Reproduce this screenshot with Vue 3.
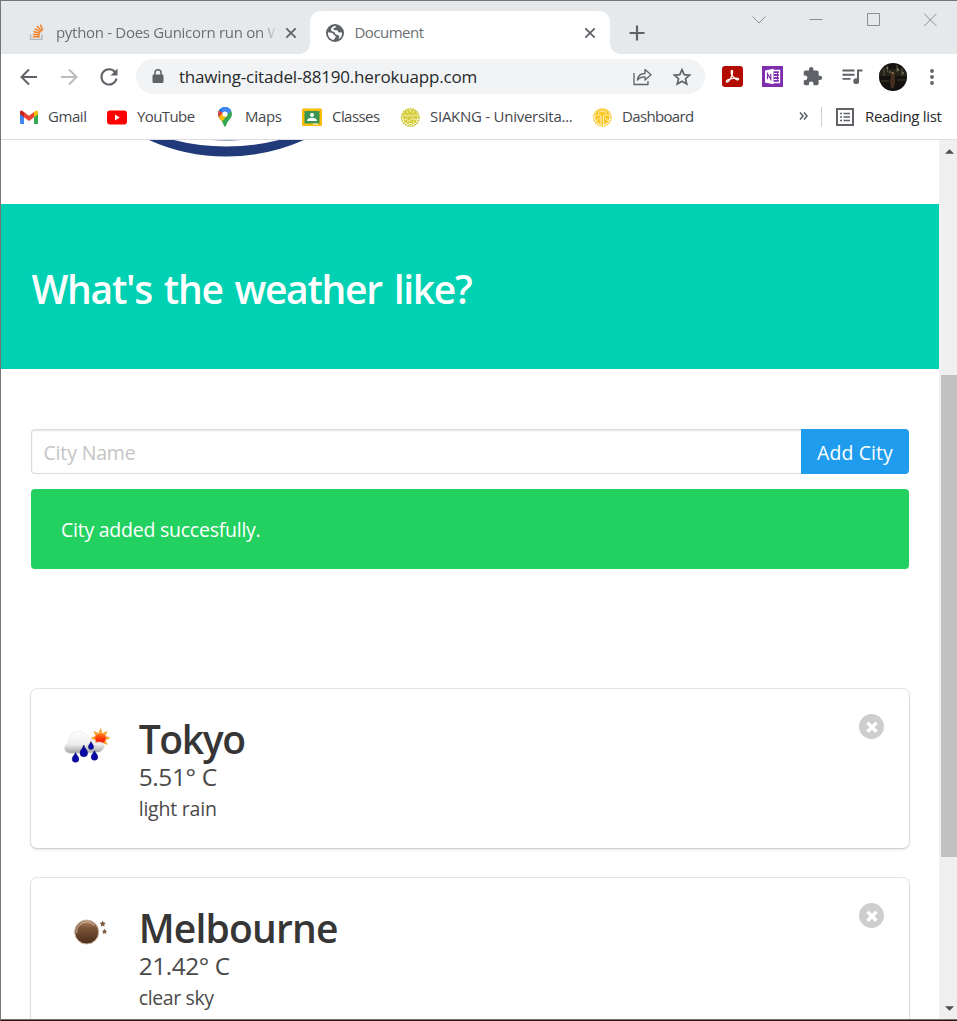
<script setup>
const bookmarks = [
  { id: 'gmail', label: 'Gmail', width: 39 },
  { id: 'youtube', label: 'YouTube', width: 58 },
  { id: 'maps', label: 'Maps', width: 37 },
  { id: 'classes', label: 'Classes', width: 48 },
  { id: 'siak', label: 'SIAKNG - Universita...', width: 143 },
  { id: 'dashboard', label: 'Dashboard', width: 72 },
]

const cities = [
  { name: 'Tokyo', nameWidth: 106, temp: '5.51° C', tempWidth: 78, sky: 'light rain', skyWidth: 78, icon: 'rain' },
  { name: 'Melbourne', nameWidth: 199, temp: '21.42° C', tempWidth: 91, sky: 'clear sky', skyWidth: 75, icon: 'night' },
]

const rays = [0, 45, 90, 135, 180, 225, 270, 315]

// Tracks a single line of text so that it spans the given width.
const vFit = {
  mounted(el, { value }) {
    el.style.letterSpacing = '0px'
    const natural = el.getBoundingClientRect().width
    el.style.letterSpacing = `${(value - natural) / el.textContent.length}px`
  },
}
</script>

<template>
  <div class="window">
    <header class="tabs">
      <div class="tab idle">
        <svg class="tab-icon so" viewBox="0 0 16 18">
          <path d="M1.2 11v5.3h12V11" fill="none" stroke="#b4b8bc" stroke-width="1.5" />
          <g stroke="#f48024" stroke-width="1.6">
            <path d="M3.5 13.6h7.4M3.7 10.9l7.3 .9M4.3 7.9l7 2.2M5.6 4.8l6.3 3.9M8 2.2l5 5.4M11.6 .5l2.5 6.3" />
          </g>
        </svg>
        <div class="tab-title clipped"><span v-fit="225">python - Does Gunicorn run on W</span></div>
        <svg class="tab-close" viewBox="0 0 12 12"><path d="M1.3 1.3l9.4 9.4M10.7 1.3l-9.4 9.4" /></svg>
      </div>
      <div class="tab active">
        <svg class="tab-icon globe" viewBox="0 0 18 18">
          <circle cx="9" cy="9" r="9" fill="#5f6368" />
          <path d="M2 8.2c2 .6 4.400 .2 5.300 1.600.5 1 .2 1.500 1.500 1.700 1.100.2 1.200.8.600 1.700-.5.900-.6 1.700-1.600 2.600C4.300 15.600 1.600 12.500 2 8.200zM9.700 2.100c.9 1-.4 1.700-1.500 2-1.300.5-.9 1.500-.1 2 .9.500 2.700-.5 3.500.5.6.800.2 1.700 1.500 1.900 1.200.1 2-.6 2.800-.1.500 3-1 5.500-3.400 6.700.2-1.400 1-2 .7-3.100-.5-1.300-2.400-.9-3.500-1.800-.9-.8-.4-1.900-1.600-2.300-1.500-.4-3-.8-3.200-2.100C5.300 3.500 7.300 2 9.700 2.100z" fill="#fff" />
        </svg>
        <div class="tab-title"><span v-fit="69">Document</span></div>
        <svg class="tab-close" viewBox="0 0 12 12"><path d="M1.300 1.300l9.400 9.400M10.700 1.300l-9.400 9.400" /></svg>
      </div>
      <svg class="new-tab" viewBox="0 0 16 16"><path d="M8 .5v15M.5 8h15" /></svg>
      <div class="controls">
        <svg viewBox="0 0 14 14"><path d="M.5 3.500l6.500 6.500 6.500-6.500" /></svg>
        <svg viewBox="0 0 14 14"><path d="M.5 6.500h13" /></svg>
        <svg viewBox="0 0 14 14"><path d="M1.500 .5h12v12h-12z" /></svg>
        <svg viewBox="0 0 14 14"><path d="M1.200 .7l12.300 12.300M13.500 .7L1.200 13" /></svg>
      </div>
    </header>

    <div class="toolbar">
      <div class="cell">
        <svg class="line" width="18" height="18" viewBox="0 0 18 18"><path d="M17 9H2M9 1.500L1.500 9 9 16.500" /></svg>
      </div>
      <div class="cell">
        <svg class="line faded" width="18" height="18" viewBox="0 0 18 18"><path d="M1 9h15M9 1.500L16.500 9 9 16.500" /></svg>
      </div>
      <div class="cell">
        <svg width="20" height="20" viewBox="0 0 20 20">
          <path d="M16 5.200A7.600 7.600 0 1 0 17.500 11.500" fill="none" stroke="#5f6368" stroke-width="2" />
          <path d="M18.500 1.500v7h-7z" fill="#5f6368" />
        </svg>
      </div>
      <div class="address">
        <svg class="lock" viewBox="0 0 12 15">
          <rect x=".5" y="5.500" width="11" height="8.500" rx="1.300" fill="#5f6368" />
          <path d="M3 6V3.800a3 3 0 0 1 6 0V6" fill="none" stroke="#5f6368" stroke-width="1.500" />
        </svg>
        <div class="url"><span v-fit="298">thawing-citadel-88190.herokuapp.com</span></div>
        <svg class="share" viewBox="0 0 20 19">
          <path d="M2 6v11.500h14V14M5.500 13c.5-4.500 3-6.500 7.500-6.500V2.500l6 5.200-6 5.300V9.800c-3.500 0-5.800.8-7.500 3.200z" fill="none" stroke="#5f6368" stroke-width="1.300" stroke-linejoin="round" />
        </svg>
        <svg class="star" viewBox="0 0 20 20">
          <path d="M10 2.600l2.200 5 5.400 .5-4.100 3.600 1.200 5.300L10 14.200 5.300 17l1.200-5.300L2.400 8.100l5.400-.5z" fill="none" stroke="#5f6368" stroke-width="1.700" />
        </svg>
      </div>
      <div class="extensions">
        <div class="cell">
          <svg width="21" height="21" viewBox="0 0 21 21">
            <rect width="21" height="21" rx="3" fill="#b30b00" />
            <path d="M4.500 15.800c-1-1.200 2.500-3 7-3.500 4-.5 5.500.3 5 1.200-.7 1.200-4.500-1-6.300-4-1.300-2.300-1.400-4.800-.4-5 1.200-.2 1 3.300-.6 6.700-1.500 3.200-3.800 5.600-4.700 4.600z" fill="none" stroke="#fff" stroke-width="1.300" />
          </svg>
        </div>
        <div class="cell">
          <svg width="21" height="21" viewBox="0 0 21 21">
            <rect width="21" height="21" fill="#7f2fae" />
            <path d="M11 4.500h6.500v12H11" fill="none" stroke="#fff" stroke-width="1.300" />
            <path d="M12 7.500h3M12 10.500h3M12 13.500h3M18 7.500h-2M18 10.500h-2M18 13.500h-2" stroke="#fff" stroke-width="1.200" />
            <path d="M3 4.500l8.500-1.700v15.400L3 16.500z" fill="#fff" />
            <path d="M5.500 13.300V7.700l3.300 5.600V7.700" fill="none" stroke="#7f2fae" stroke-width="1.200" />
          </svg>
        </div>
        <div class="cell">
          <svg width="21" height="21" viewBox="0 0 24 24">
            <path fill="#5f6368" d="M20.500 11H19V7c0-1.100-.9-2-2-2h-4V3.500a2.500 2.500 0 0 0-5 0V5H4c-1.100 0-2 .9-2 2v3.800h1.500a2.700 2.700 0 0 1 0 5.400H2V20c0 1.100.9 2 2 2h3.800v-1.500a2.700 2.700 0 0 1 5.400 0V22H17c1.100 0 2-.9 2-2v-4h1.500a2.500 2.500 0 0 0 0-5z" />
          </svg>
        </div>
        <div class="cell">
          <svg width="21" height="18" viewBox="0 0 21 18">
            <path d="M.5 2.500h12M.5 6.700h12M.5 10.900h8" stroke="#5f6368" stroke-width="1.900" />
            <path d="M16 13V2.500h4.500" fill="none" stroke="#5f6368" stroke-width="2" />
            <circle cx="14.200" cy="13.200" r="2.900" fill="#5f6368" />
          </svg>
        </div>
        <div class="cell profile">
          <svg width="28" height="28" viewBox="0 0 28 28">
            <clipPath id="avatar"><circle cx="14" cy="14" r="14" /></clipPath>
            <g clip-path="url(#avatar)">
              <rect width="28" height="28" fill="#14120e" />
              <path d="M0 6h28v7H0z" fill="#24241a" />
              <path d="M5 5v8M8.500 3v6M18 2v7M23 5v8" stroke="#4d4b35" stroke-width="1.300" />
              <path d="M8 4v2M19 5v3M24 9v2M11 8v2" stroke="#a29a76" stroke-width="1" />
              <path d="M12.500 10l2.500-1 1 5v6l-1.500 5H12l-1-6z" fill="#43301f" />
              <path d="M2 18h8M18 17h8" stroke="#33301f" stroke-width="1.500" />
              <circle cx="13.800" cy="10" r="1.200" fill="#8d6b4d" />
            </g>
          </svg>
        </div>
        <div class="cell">
          <svg width="4" height="16" viewBox="0 0 4 16" fill="#5f6368">
            <circle cx="2" cy="2" r="1.900" /><circle cx="2" cy="8" r="1.900" /><circle cx="2" cy="14" r="1.900" />
          </svg>
        </div>
      </div>
    </div>

    <nav class="bookmarks">
      <div v-for="b in bookmarks" :key="b.id" class="bookmark">
        <svg class="bm-icon" viewBox="0 0 20 20">
          <g v-if="b.id === 'gmail'">
            <path d="M1 5.500v10.200c0 .7.5 1.300 1.300 1.300H5V9z" fill="#4285f4" />
            <path d="M19 5.500v10.200c0 .7-.5 1.300-1.300 1.300H15V9z" fill="#34a853" />
            <path d="M15 5l2-1.300c1-.6 2 .2 2 1.300v2.200l-4 3z" fill="#fbbc04" />
            <path d="M1 7.200V5c0-1.100 1-1.900 2-1.300L5 5v5.200z" fill="#c5221f" />
            <path d="M5 4.900l5 3.800 5-3.800v5.300l-5 3.800-5-3.800z" fill="#ea4335" />
          </g>
          <g v-else-if="b.id === 'youtube'">
            <rect y="3.500" width="20" height="14" rx="3" fill="#f00" />
            <path d="M8 7.500l4.800 3L8 13.500z" fill="#fff" />
          </g>
          <g v-else-if="b.id === 'maps'">
            <clipPath id="pin"><path d="M10 0a7 7 0 0 1 7 7c0 4.300-4.600 6.500-5.800 11.500Q10 21 8.800 18.500C7.600 13.500 3 11.300 3 7a7 7 0 0 1 7-7z" /></clipPath>
            <g clip-path="url(#pin)">
              <path d="M0 0h20v20H0z" fill="#34a853" />
              <path d="M2 14L10 7l7-8H8z" fill="#4285f4" />
              <path d="M2 0h6l-1 5-4 4.500z" fill="#1a73e8" />
              <path d="M2 2l6 4-3 6-3-3z" fill="#ea4335" />
              <path d="M3 11L9 5l3 4-5.500 6z" fill="#fbbc04" />
              <path d="M6 1.500L13-1l4 4-7 7z" fill="#4285f4" />
            </g>
            <circle cx="10" cy="7" r="2.600" fill="#fff" />
          </g>
          <g v-else-if="b.id === 'classes'">
            <rect y="1.500" width="20" height="17.500" rx="1.200" fill="#fbbc04" />
            <rect x="2.500" y="4" width="15" height="12.500" fill="#3b9654" />
            <circle cx="10" cy="8" r="2" fill="#fff" />
            <path d="M5 14c0-4.400 10-4.400 10 0z" fill="#fff" />
            <path d="M11 16.500h5v1.200h-5z" fill="#e8f0e9" />
          </g>
          <g v-else :class="['seal', b.id]">
            <circle cx="10.300" cy="10.500" r="8.700" stroke-dasharray="1.800 .7" />
            <path class="core" d="M2.500 9a7.800 7.500 0 0 1 15.500 0l-2 6.500-5.700 3-5.800-3z" />
            <path v-if="b.id === 'siak'" class="cut" d="M10.300 2v3M6.500 4l1.500 2M14 4l-1.500 2M3.500 8.500q3-1 4.500 1.500M17 8.500q-3-1-4.500 1.500M4.500 12.500q2-2 3 .5t3 0 5.500-.5M6.500 16l1-1.500M14 16l-1-1.500M8 7.500l2.300 2 2.300-2M8.500 16.500h3.600" />
            <path v-else class="cut" d="M2 10q4-4 7-1v9M18.500 10q-4-4-7-1v9M6 5.500q4-3 8.500 0M4.500 14l3-3M16 14l-3-3" />
          </g>
        </svg>
        <div class="bm-label" :style="{ width: b.width + 'px' }"><span v-fit="b.width - 0.5">{{ b.label }}</span></div>
      </div>
      <div class="reading">
        <svg class="more" viewBox="0 0 9 8"><path d="M1 .5L4 4 1 7.500M5 .5L8 4 5 7.500" /></svg>
        <i class="divider"></i>
        <svg class="list" viewBox="0 0 18 18">
          <rect x="1" y="1" width="16" height="16" stroke-width="2" fill="none" />
          <path d="M4 5.500h2M4 9h2M4 12.500h2M7.500 5.500H14M7.500 9H14M7.500 12.500H14" stroke-width="1.500" />
        </svg>
        <div class="bm-label strong"><span v-fit="76.5">Reading list</span></div>
      </div>
    </nav>

    <div class="viewport">
      <main class="page">
        <svg class="crest" viewBox="0 0 938 64">
          <path d="M148 0Q184 16.500 225 16.500T303 0H278Q252 6.500 225 6.500T173 0z" fill="#213a79" />
          <path d="M210 0h31q-15 1.400-31 0z" fill="#7c89b0" />
        </svg>
        <section class="hero"><h1><span v-fit="440">What's the weather like?</span></h1></section>
        <section class="form">
          <div class="field">
            <div class="input"><span v-fit="92">City Name</span></div>
            <div class="button"><span v-fit="76">Add City</span></div>
          </div>
          <div class="notice"><span v-fit="199.5">City added succesfully.</span></div>
        </section>
        <section class="cities">
          <article v-for="c in cities" :key="c.name" class="card">
            <svg v-if="c.icon === 'rain'" class="weather" viewBox="0 0 62 62">
              <defs>
                <linearGradient id="cloud" x1="0" y1="0" x2="0" y2="1">
                  <stop offset="0" stop-color="#fff" /><stop offset=".6" stop-color="#ededed" /><stop offset="1" stop-color="#a3a3a3" />
                </linearGradient>
                <linearGradient id="sun" x1="0" y1="0" x2="0" y2="1">
                  <stop offset="0" stop-color="#ff9a1c" /><stop offset=".5" stop-color="#ff3a0a" /><stop offset="1" stop-color="#f21400" />
                </linearGradient>
              </defs>
              <path v-for="r in rays" :key="r" d="M42.500 18.500L44.500 14l2 4.500z" fill="#f9a32a" :transform="`rotate(${r} 44.500 24)`" />
              <circle cx="44.500" cy="24" r="5.500" fill="url(#sun)" />
              <path d="M14 39c-7 0-7-8.500-1.500-10.500 0-14 18-14.500 20.500-3 3-1 6 .5 6.500 3.500 6-3 10.500 1 8 5.500-1.500 3-4 3.500-7 3.500z" fill="url(#cloud)" stroke="#dadada" stroke-width=".5" />
              <path d="M14 39h14c8 0 12-1 16-1.500" fill="none" stroke="#858585" stroke-width=".7" opacity=".6" />
              <g fill="#0909a8" stroke="#05055f" stroke-width=".5">
                <path d="M19.500 38.500c1 3 3.300 4 3.300 6.500a3.300 3.300 0 0 1-6.600 0c0-2.500 2.300-3.500 3.300-6.500z" />
                <path d="M27.800 31c1.200 4 3.800 5 3.800 8a3.800 3.800 0 0 1-7.600 0c0-3 2.600-4 3.800-8z" />
                <path d="M35 27.500c.8 2.500 2.600 3.400 2.600 5.300a2.600 2.600 0 0 1-5.200 0c0-1.900 1.800-2.800 2.600-5.300z" />
                <path d="M38.500 36.500c1 3 3.300 4 3.300 6.500a3.300 3.300 0 0 1-6.600 0c0-2.500 2.300-3.500 3.300-6.500z" />
              </g>
            </svg>
            <svg v-else class="weather" viewBox="0 0 62 62">
              <defs>
                <linearGradient id="moon" x1="0" y1="0" x2="0" y2="1">
                  <stop offset="0" stop-color="#b08a6d" /><stop offset=".35" stop-color="#7a5337" /><stop offset="1" stop-color="#4a2c1a" />
                </linearGradient>
              </defs>
              <circle cx="30.700" cy="29" r="12" fill="url(#moon)" stroke="#c9b3a0" stroke-width="1" />
              <path d="M20.800 30a10 10 0 0 1 17.500-7.500" fill="none" stroke="#d4b9a3" stroke-width="1" />
              <g fill="#7c563d">
                <path d="M46.700 17.500l.9 2.100 2.200.3-1.600 1.500.4 2.300-1.900-1.100-1.900 1.100.4-2.300-1.600-1.500 2.200-.3z" />
                <path d="M48.500 25.700l.8 1.700 1.900.3-1.400 1.300.4 1.900-1.700-.9-1.700.9.400-1.900-1.400-1.300 1.900-.3z" />
              </g>
            </svg>
            <div class="details">
              <div class="name"><span v-fit="c.nameWidth">{{ c.name }}</span></div>
              <div class="temp"><span v-fit="c.tempWidth">{{ c.temp }}</span></div>
              <div class="sky"><span v-fit="c.skyWidth">{{ c.sky }}</span></div>
            </div>
            <svg class="delete" viewBox="0 0 25 25">
              <circle cx="12.500" cy="12.500" r="12.500" fill="#cecece" />
              <path d="M8.500 8.800l9 9M17.500 8.800l-9 9" stroke="#fff" stroke-width="3.400" />
            </svg>
          </article>
        </section>
      </main>
      <aside class="scrollbar">
        <svg class="arrow" viewBox="0 0 10 5"><path d="M0 5L5 0l5 5z" /></svg>
        <div class="thumb"></div>
        <svg class="arrow down" viewBox="0 0 10 5"><path d="M0 0l5 5 5-5z" /></svg>
      </aside>
    </div>
  </div>
</template>

<style>
body {
  margin: 0;
  overflow: hidden;
}
</style>

<style scoped>
.window {
  box-sizing: border-box;
  width: 957px;
  height: 1021px;
  display: flex;
  flex-direction: column;
  overflow: hidden;
  border-top: 1px solid #77757a;
  border-left: 1px solid #77757a;
  border-bottom: 1px solid #2b150f;
  background: #fff;
  font-family: "Open Sans", "Noto Sans", sans-serif;
  color: #4a4a4a;
  white-space: nowrap;
}
svg {
  display: block;
  flex: none;
}
.window span {
  display: inline-block;
}
.tabs {
  flex: none;
  display: flex;
  height: 53px;
  box-sizing: border-box;
  padding-top: 10px;
  background: #e5e9ec;
}
.tab {
  display: flex;
  align-items: center;
  height: 43px;
  box-sizing: border-box;
}
.idle {
  width: 309px;
  padding-left: 28px;
}
.active {
  position: relative;
  width: 300px;
  padding-left: 16px;
  border-radius: 11px 11px 0 0;
  background: #fff;
}
.active::before,
.active::after {
  content: "";
  position: absolute;
  bottom: 0;
  width: 10px;
  height: 10px;
}
.active::before {
  left: -10px;
  background: radial-gradient(circle at 0 0, transparent 9.5px, #fff 10px);
}
.active::after {
  right: -10px;
  background: radial-gradient(circle at 100% 0, transparent 9.5px, #fff 10px);
}
.so {
  width: 16px;
  height: 17px;
}
.globe {
  width: 18px;
  height: 18px;
}
.tab-title {
  font-size: 15px;
  line-height: 20px;
  color: #6b6f73;
  overflow: hidden;
  height: 20px;
  margin-bottom: 2px;
}
.idle .tab-title {
  width: 219px;
  margin-left: 11px;
}
.active .tab-title {
  width: 219px;
  margin-left: 10.5px;
}
.clipped {
  -webkit-mask-image: linear-gradient(90deg, #000 205px, transparent 222px);
  mask-image: linear-gradient(90deg, #000 205px, transparent 222px);
}
.tab-close {
  width: 12px;
  height: 12px;
  margin-left: 10px;
  fill: none;
  stroke: #5f6368;
  stroke-width: 1.8;
}
.new-tab {
  width: 16px;
  height: 16px;
  margin: 14px 0 0 19px;
  fill: none;
  stroke: #5f6368;
  stroke-width: 2.2;
}
.controls {
  display: flex;
  gap: 43px;
  margin-left: auto;
  margin-right: 20px;
  padding-top: 2px;
}
.controls svg {
  width: 14px;
  height: 14px;
  fill: none;
  stroke: #8b8f93;
  stroke-width: 1;
}
.toolbar {
  flex: none;
  display: flex;
  align-items: center;
  height: 46px;
  box-sizing: border-box;
  padding-left: 7.5px;
  padding-bottom: 1px;
}
.cell {
  width: 40px;
  height: 40px;
  display: flex;
  align-items: center;
  justify-content: center;
}
.profile {
  box-sizing: border-box;
  padding-left: 2px;
}
.line {
  fill: none;
  stroke: #5f6368;
  stroke-width: 2;
}
.faded {
  stroke: #babcbe;
}
.address {
  display: flex;
  align-items: center;
  width: 569px;
  height: 35px;
  box-sizing: border-box;
  margin: 0 7px 0 7.5px;
  padding-left: 16px;
  border-radius: 18px;
  background: #f1f3f4;
}
.lock {
  width: 12px;
  height: 15px;
}
.url {
  width: 453px;
  margin-left: 15px;
  font-size: 17px;
  line-height: 24px;
  color: #27292c;
}
.share {
  width: 20px;
  height: 19px;
}
.star {
  width: 20px;
  height: 20px;
  margin-left: 20px;
}
.extensions {
  display: flex;
}
.bookmarks {
  flex: none;
  display: flex;
  align-items: center;
  box-sizing: border-box;
  height: 40px;
  padding: 0 0 6px 17px;
  border-bottom: 1px solid #dadce0;
}
.bookmark {
  display: flex;
  align-items: center;
  margin-right: 20px;
}
.bookmark:nth-child(5) {
  margin-right: 19px;
}
.bm-icon {
  width: 20px;
  height: 20px;
  margin-right: 10px;
}
.bookmark:first-child .bm-icon {
  margin-left: 1px;
  margin-right: 9px;
}
.bm-label {
  margin-bottom: 2px;
  font-size: 15px;
  line-height: 20px;
  color: #45484c;
}
.strong {
  color: #26282b;
}
.seal circle {
  fill: none;
  stroke-width: 1.5;
}
.seal .cut {
  fill: none;
  stroke: #fffbe0;
  stroke-width: .8;
}
.siak circle { stroke: #c9c32c; }
.siak .core { fill: #d5ce3c; }
.dashboard circle { stroke: #f9cc3a; }
.dashboard .core { fill: #f9c828; }
.reading {
  display: flex;
  align-items: center;
  margin-left: auto;
  margin-right: 15.5px;
}
.more {
  width: 9px;
  height: 8px;
  margin-bottom: 2px;
  fill: none;
  stroke: #5f6368;
  stroke-width: 1.6;
}
.divider {
  width: 1px;
  height: 20px;
  margin: 0 14px 0 13px;
  background: #cdd0d3;
}
.list {
  width: 18px;
  height: 18px;
  margin-right: 11px;
  stroke: #5f6368;
}
.viewport {
  flex: 1;
  min-height: 0;
  display: flex;
  border-bottom: 1px solid #77706f;
}
.page {
  width: 938px;
  overflow: hidden;
}
.crest {
  width: 938px;
  height: 64px;
}
.hero {
  box-sizing: border-box;
  height: 165px;
  padding: 61px 30.5px;
  background: #00d1b2;
}
.hero h1 {
  margin: 0;
  font-size: 39px;
  line-height: 47px;
  font-weight: 600;
  word-spacing: 3px;
  color: #fff;
}
.form {
  padding: 60px 30px 0;
}
.field {
  display: flex;
  height: 45px;
}
.input {
  flex: 1;
  box-sizing: border-box;
  padding-left: 11.5px;
  border: 1px solid #dbdbdb;
  border-right: 0;
  border-radius: 4px 0 0 4px;
  box-shadow: inset 0 1px 2px rgba(10, 10, 10, .1);
  font-size: 19.5px;
  line-height: 46px;
  color: #c5c5c5;
}
.button {
  width: 108px;
  border-radius: 0 4px 4px 0;
  background: #209cee;
  color: #fff;
  text-align: center;
  font-size: 19.5px;
  line-height: 47px;
}
.notice {
  box-sizing: border-box;
  height: 80px;
  margin-top: 15px;
  padding-left: 30px;
  border-radius: 4px;
  background: #23d160;
  color: #fff;
  font-size: 19.5px;
  line-height: 82px;
}
.cities {
  display: flex;
  flex-direction: column;
  gap: 30px;
  padding: 120px 30px 0;
}
.card {
  flex: none;
  display: flex;
  align-items: flex-start;
  box-sizing: border-box;
  height: 159px;
  padding: 25px;
  border-radius: 6px;
  box-shadow: 0 2px 3px rgba(10, 10, 10, .1), 0 0 0 1px rgba(10, 10, 10, .1);
}
.weather {
  width: 62px;
  height: 62px;
}
.details {
  flex: 1;
  margin-left: 20.7px;
  padding-top: 2px;
}
.name {
  font-size: 39px;
  line-height: 46px;
  font-weight: 600;
  color: #363636;
}
.temp {
  margin-top: -1px;
  font-size: 24.5px;
  line-height: 32px;
}
.sky {
  font-size: 19.5px;
  line-height: 32px;
}
.delete {
  width: 25px;
  height: 25px;
}
.scrollbar {
  display: flex;
  flex-direction: column;
  align-items: center;
  width: 18px;
  box-sizing: border-box;
  padding: 9px 0 8px;
  background: #f0f0f0;
}
.arrow {
  width: 9px;
  height: 5px;
  margin-left: 2px;
  fill: #505050;
}
.down {
  margin-top: auto;
}
.thumb {
  align-self: flex-end;
  width: 16px;
  height: 482px;
  margin-top: 221px;
  background: #c1c1c1;
}
</style>
